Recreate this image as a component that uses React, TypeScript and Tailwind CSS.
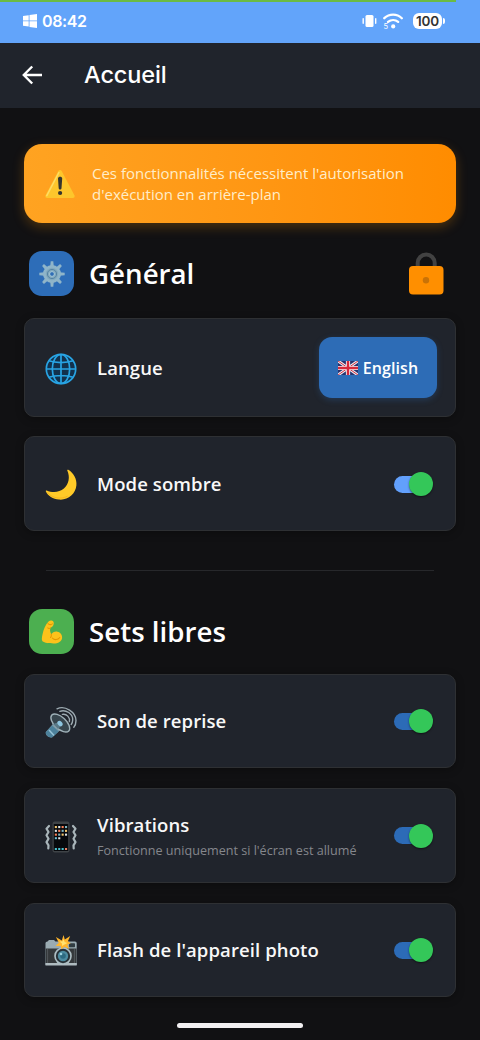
import React, { useState } from 'react';

const GearIcon = () => (
  <svg width="26" height="26" viewBox="0 0 26 26">
    <g fill="#8fb5c9">
      {[0, 45, 90, 135, 180, 225, 270, 315].map(a => (
        <path key={a} d="M11.2 5.5 11.7.3h2.6l.5 5.2z" transform={`rotate(${a} 13 13)`} />
      ))}
    </g>
    <circle cx="13" cy="13" r="7" fill="none" stroke="#8fb5c9" strokeWidth="4" />
    <circle cx="13" cy="13" r="6.2" fill="#82a9be" />
    <circle cx="13" cy="13" r="4.6" fill="none" stroke="#5685a5" strokeWidth="1" />
    <circle cx="13" cy="13" r="2.4" fill="#2f6db5" stroke="#a9cbd8" strokeWidth="1" />
  </svg>
);

const MuscleIcon = () => (
  <svg width="22" height="24" viewBox="0 0 24 26">
    <path d="M8.500 1.200c1.500-1.200 4-.9 4.900.4.9 1.200.7 3.600-.9 5.400-1 1-2.100 1.200-2.500 2.400-.4 1.900.3 4.300 1.200 6.100 1.300-2.200 4-3.500 6.700-2.900 3.400.7 5.500 3.600 5.100 6.900-.4 3.900-4.100 6-9.400 6-4.800 0-9.700-.3-12-2.300C.4 21.800 1 18.400 1.800 14.900 2.800 10.500 4.700 4.600 8.500 1.200z" fill="#fcc21b" />
    <path d="M7.600 3.800c1.600 1.200 3.600 1.500 4.900.2M7.400 8.500c.9.900 2 .7 2.900-.1M11.200 15.500c.3 1.200 0 2.500-.8 3.500M12.300 19.500c2.200 2.600 6.200 2.400 8.200-.5" fill="none" stroke="#e59600" strokeWidth="1.100" strokeLinecap="round" />
  </svg>
);

const WarningIcon = () => (
  <svg width="32" height="32" viewBox="0 0 32 32">
    <path d="M14.200 3.200c.8-1.500 2.800-1.500 3.600 0l12.600 24c.7 1.400-.1 2.800-1.700 2.800H3.300c-1.600 0-2.400-1.400-1.700-2.800z" fill="#fdc62c" />
    <path d="M14.900 4.500 2.800 27.600" fill="none" stroke="#ffdc65" strokeWidth="1.500" strokeLinecap="round" />
    <path d="M14 10.500c0-2.400 4.200-2.400 4.200 0l-.7 9.700c-.1 1.700-2.700 1.700-2.800 0z" fill="#35352f" />
    <circle cx="16.100" cy="25" r="2.100" fill="#35352f" />
  </svg>
);

const LockIcon = () => (
  <svg width="36" height="44" viewBox="0 0 36 44">
    <path d="M9.700 20V12a8.500 8.500 0 0 1 17 0v8" fill="none" stroke="#424242" strokeWidth="4" />
    <rect x="1" y="15" width="34.500" height="28.500" rx="4" fill="#ff8f00" />
    <circle cx="18" cy="29.300" r="3.200" fill="#c97206" />
  </svg>
);

const GlobeIcon = () => (
  <svg width="32" height="32" viewBox="0 0 32 32" fill="none" stroke="#28a4e4" strokeWidth="1.700">
    <circle cx="16" cy="16" r="14.700" fill="#12314d" />
    <ellipse cx="16" cy="16" rx="8.700" ry="14.500" />
    <path d="M16 1.300v29.400M1.300 16h29.400M3.800 7.800c7 2.300 17.400 2.300 24.400 0M3.800 24.200c7-2.300 17.400-2.300 24.400 0" />
  </svg>
);

const MoonIcon = () => (
  <svg width="32" height="32" viewBox="0 0 32 32">
    <path d="M23.300.8c5.400 3.300 8.700 9.200 8.100 15.500-.8 8.700-8.500 15.100-17.200 14.300C7.900 30 2.800 27.200.8 22.300c-.2-.7.300-1.100.9-.8 5.800 2.600 12.800 2 17.200-1.900 5.100-4.500 6.300-11.600 3.400-18-.3-.7.300-1.200 1-.8z" fill="#ffca28" />
    <path d="M2.500 23.600c4.800 5.800 13.800 7.200 20.200 3.400" fill="none" stroke="#f6b51e" strokeWidth="1" />
  </svg>
);

const SpeakerIcon = () => (
  <svg width="32" height="32" viewBox="0 0 32 32">
    <g fill="none" stroke="#9caab1" strokeWidth="1.400" strokeLinecap="round">
      <path d="M12 2.800C20-1 31 6 31 14.500c0 2.600-.7 5-2.200 6.700" />
      <path d="M14.800 5.300C21 3 28 8 27.700 14c0 2-.6 3.300-1.500 4.500" />
      <path d="M17.400 8.400c4.300-.8 7.800 3 7 7.200" />
    </g>
    <path d="M6.400 8.600 7.500 18.500.8 26c-.8 3 3 6.300 6.500 5.300l7.200-6.500 9.500.6z" fill="#7698a6" />
    <path d="m1 26 6-6.500 6.700 6-6.400 5.800C4 32.300.2 29 1 26z" fill="#4c819b" />
    <path d="m4 24 5 5.500" stroke="#96c2d5" strokeWidth="1.500" />
    <ellipse cx="15.300" cy="17" rx="5.900" ry="11.600" transform="rotate(-47 15.300 17)" fill="#37454d" stroke="#9fb1b8" strokeWidth="1.400" />
    <path d="m8 18 7-2.300 2.300 3.400-4.300 4z" fill="#597987" />
    <ellipse cx="15" cy="17.500" rx="2.200" ry="3" transform="rotate(-42 15 17.500)" fill="#8dc5df" />
  </svg>
);

const PhoneIcon = () => (
  <svg width="32" height="32" viewBox="0 0 32 32">
    <rect x="7.500" y=".5" width="17" height="31" rx="2.200" fill="#3e4347" />
    <rect x="8.800" y="3" width="14.400" height="27" rx=".6" fill="#07090d" />
    {[5, 8.800, 12.600].map((y, row) => (
      <g key={y}>
        {['#f4c66f', '#dbe4e7', '#ff8055', '#82b9c4'].map((c, i, all) => (
          <rect key={i} x={9.800 + i * 3.400} y={y} width="2.100" height="2.100" fill={all[(i + row) % 4]} />
        ))}
      </g>
    ))}
    <path d="M9.800 16.200h2.100v2H9.800z" fill="#73c4d9" />
    <path d="M13.200 16.200h2.100v2h-2.100z" fill="#e7e7e7" />
    <path d="M9.800 27h2.100v2H9.800zM13.200 27h2.100v2h-2.100zM16.600 27h2.100v2h-2.100z" fill="#49c1cf" />
    <path d="M20 27h2.100v2H20z" fill="#ef8164" />
    <g fill="none" stroke="#a9b5ba" strokeWidth="2.200" strokeLinecap="round" strokeLinejoin="round">
      <path d="m4 5-2.500 2.700 2 3.300-2 3.300 2 3.400-2 3.400 2 3.200-.2 3.200" />
      <path d="m28 5 2.500 2.700-2 3.300 2 3.300-2 3.400 2 3.400-2 3.200.2 3.200" />
    </g>
  </svg>
);

const CameraIcon = () => (
  <svg width="32" height="32" viewBox="0 0 32 32">
    <path d="M2.500 6.500 4 5h5l1.500 1.500H30q1.700 0 1.700 1.600v22H.5v-22q0-1.600 2-1.600z" fill="#9aabb2" />
    <path d="M.7 13.500h30.800V28H.7z" fill="#34383b" />
    <path d="M.5 28h31.200v2.500H.5z" fill="#afbbc0" />
    <path d="M2.600 14v14M29.400 14v14" stroke="#52585c" />
    <rect x="24" y="8.300" width="6" height="4" rx=".7" fill="#303c42" />
    <circle cx="18" cy="21" r="8.800" fill="#aebfc5" />
    <circle cx="18" cy="21" r="7.200" fill="#273238" />
    <circle cx="18" cy="21" r="5.200" fill="#4c8ba0" />
    <circle cx="18" cy="21" r="2.800" fill="#2c6a81" />
    <circle cx="16" cy="19" r="1.300" fill="#9bd2df" />
    <path d="m18.500 0 1.300 4.600L25.200 1l-2.300 5.300 2.800 1.900-3.400 1.500 1.600 4.300-4.400-2.200-3.300 2.500-.5-3.400-5.200.2 3.300-3.300-2.900-5.900 5.900 3.500z" fill="#ffb62c" />
    <path d="m18.500 4 1.200 3.100 2.800.9-3 1.400-2.300 1.500-.4-2.600-2.500-1.700 3.400-.3z" fill="#ffe271" />
  </svg>
);

const UkFlag = () => (
  <svg width="20" height="14" viewBox="0 0 20 14">
    <path fill="#28346f" d="M0 0h20v14H0z" />
    <path d="m0 0 20 14M20 0 0 14" stroke="#e9e9f1" strokeWidth="3" />
    <path d="m0 0 20 14M20 0 0 14" stroke="#d33140" strokeWidth="1" />
    <path d="M10 0v14M0 7h20" stroke="#f4eef2" strokeWidth="4.200" />
    <path d="M10 0v14M0 7h20" stroke="#d6293b" strokeWidth="2.400" />
  </svg>
);

function StatusBar() {
  return (
    <div className="h-[43px] bg-[#62a4fa] shrink-0">
      <div className="h-[2px] w-[456px] bg-[#6bbb43]" />
      <div className="h-[38px] pl-[23px] pr-[35px] flex items-center justify-between text-white">
        <div className="flex items-center gap-[5px]">
          <svg width="14" height="14" viewBox="0 0 14 14" fill="#fff">
            <path d="M0 2l5.700-.8v5.300H0zM6.500 1.100 14 0v6.500H6.500zM0 7.300h5.700v5.300L0 11.800zM6.500 7.300H14V14l-7.500-1.100z" />
          </svg>
          <span className="font-['Inter',sans-serif] text-[16px] leading-none font-semibold tracking-[-0.4px]">08:42</span>
        </div>
        <div className="flex items-center">
          <svg width="15" height="14" viewBox="0 0 15 14" fill="#fff">
            <rect x="3.500" y="1" width="8" height="12" rx="1.500" />
            <rect x=".5" y="4" width="1.400" height="6" rx=".7" />
            <rect x="13" y="4" width="1.400" height="6" rx=".7" />
          </svg>
          <svg className="ml-[6px]" width="20" height="17" viewBox="0 0 20 17">
            <g fill="none" stroke="#fff" strokeWidth="2.300" strokeLinecap="round">
              <path d="M1.300 5.200c5-4.800 12.600-4.800 17.500 0" />
              <path d="M5 8.900c3-2.500 7.300-2.500 10.200 0" />
            </g>
            <circle cx="10.200" cy="13.400" r="2.100" fill="#fff" />
            <text x=".5" y="16.300" fill="#fff" fontSize="7.500" fontFamily="Inter, sans-serif">5</text>
          </svg>
          <div className="ml-[10px] h-4 w-[29px] rounded-[6px] bg-white text-[#333] font-['Inter',sans-serif] text-[13.500px] font-semibold leading-4 text-center tracking-[-0.200px]">100</div>
          <div className="ml-px h-[6px] w-[2px] rounded-r bg-white" />
        </div>
      </div>
    </div>
  );
}

function Toggle({ on, onToggle, light }: { on: boolean; onToggle: () => void; light?: boolean }) {
  return (
    <button onClick={onToggle} className="relative w-[39px] h-6 flex items-center cursor-pointer">
      <span className={`h-[17px] w-[37px] rounded-full ${light ? 'bg-[#62a0fc]' : 'bg-[#2c6bb7]'}`} />
      <span className={`absolute top-0 size-6 rounded-full bg-[#34c759] shadow-[0_1px_2px_rgba(0,0,0,0.5)] ${on ? 'right-0' : 'left-0'}`} />
    </button>
  );
}

type RowProps = {
  icon: React.ReactNode;
  title: string;
  subtitle?: string;
  className: string;
  children: React.ReactNode;
};

function SettingRow({ icon, title, subtitle, className, children }: RowProps) {
  return (
    <div className={`flex items-center rounded-[10px] border border-[#2e3033] bg-[#20242c] pl-5 shadow-[0_2px_8px_rgba(0,0,0,0.3)] ${className}`}>
      <div className="w-8 shrink-0 pt-[2px]">{icon}</div>
      <div className="ml-5 flex-1">
        <div className="text-[18.500px] leading-[26px] tracking-[0.1px] font-semibold text-[#f8f8f8] whitespace-nowrap">{title}</div>
        {subtitle && <div className="text-[12.600px] leading-[18px] mt-1 text-[#85878c] whitespace-nowrap">{subtitle}</div>}
      </div>
      {children}
    </div>
  );
}

export default function App() {
  const [dark, setDark] = useState(true);
  const [sound, setSound] = useState(true);
  const [vibration, setVibration] = useState(true);
  const [flash, setFlash] = useState(true);

  return (
    <div className="w-[480px] h-[1040px] overflow-hidden bg-[#111113] flex flex-col font-['Open_Sans',sans-serif]">
      <StatusBar />

      <header className="h-[65px] shrink-0 bg-[#20242c] flex items-center pl-[22px] pb-[2px]">
        <svg width="20" height="20" viewBox="0 0 20 20" fill="none" stroke="#fff" strokeWidth="2.400">
          <path d="M20 10H2M10.200 1.500 1.800 10l8.400 8.500" />
        </svg>
        <h1 className="ml-[42px] font-['Inter',sans-serif] text-[23.500px] leading-none font-medium text-white tracking-[-0.1px]">Accueil</h1>
      </header>

      <main className="flex flex-col px-6 pt-9">
        {/* Permission banner */}
        <div className="h-[79px] shrink-0 rounded-[18px] bg-linear-to-r from-[#ffa321] to-[#ff8c00] flex items-center pl-5 shadow-[0_4px_12px_rgba(255,152,0,0.25)]">
          <WarningIcon />
          <p className="ml-4 text-[15px] leading-[21px] text-[#ffedc8] whitespace-nowrap">
            Ces fonctionnalités nécessitent l'autorisation<br />d'exécution en arrière-plan
          </p>
        </div>

        <div className="mt-7 h-[45px] px-[5px] flex items-center">
          <div className="size-[45px] rounded-[13px] bg-[#2d6db8] flex items-center justify-center"><GearIcon /></div>
          <h2 className="ml-[15px] flex-1 text-[27.700px] leading-none font-semibold text-white">Général</h2>
          <div className="mr-[7px] mb-px"><LockIcon /></div>
        </div>

        <SettingRow icon={<GlobeIcon />} title="Langue" className="mt-[22px] h-[99px] pr-[18px]">
          <button className="h-[61px] w-[118px] rounded-[13px] bg-[#2d6cb6] flex items-center justify-center gap-[5px] shadow-[0_2px_6px_rgba(45,108,182,0.3)] text-base tracking-[0.1px] font-semibold text-white cursor-pointer">
            <UkFlag />
            <span>English</span>
          </button>
        </SettingRow>
        <SettingRow icon={<MoonIcon />} title="Mode sombre" className="mt-[19px] h-[95px] pt-px pr-[22px]">
          <Toggle on={dark} onToggle={() => setDark(!dark)} light />
        </SettingRow>

        <div className="mx-[22px] mt-[39px] h-px bg-[#27282b]" />

        <div className="mt-[38px] h-[45px] px-[5px] flex items-center">
          <div className="size-[45px] rounded-[13px] bg-[#4caf50] flex items-center justify-center"><MuscleIcon /></div>
          <h2 className="ml-[15px] text-[27.700px] leading-none font-semibold text-white">Sets libres</h2>
        </div>

        <SettingRow icon={<SpeakerIcon />} title="Son de reprise" className="mt-5 h-[94px] pr-[22px]">
          <Toggle on={sound} onToggle={() => setSound(!sound)} />
        </SettingRow>
        <SettingRow icon={<PhoneIcon />} title="Vibrations" subtitle="Fonctionne uniquement si l'écran est allumé" className="mt-5 h-[95px] pr-[22px]">
          <Toggle on={vibration} onToggle={() => setVibration(!vibration)} />
        </SettingRow>
        <SettingRow icon={<CameraIcon />} title="Flash de l'appareil photo" className="mt-5 h-[94px] pr-[22px]">
          <Toggle on={flash} onToggle={() => setFlash(!flash)} />
        </SettingRow>

        <div className="mt-[26px] h-[5px] w-[126px] rounded-full bg-[#f2f0f2] self-center" />
      </main>
    </div>
  );
}
